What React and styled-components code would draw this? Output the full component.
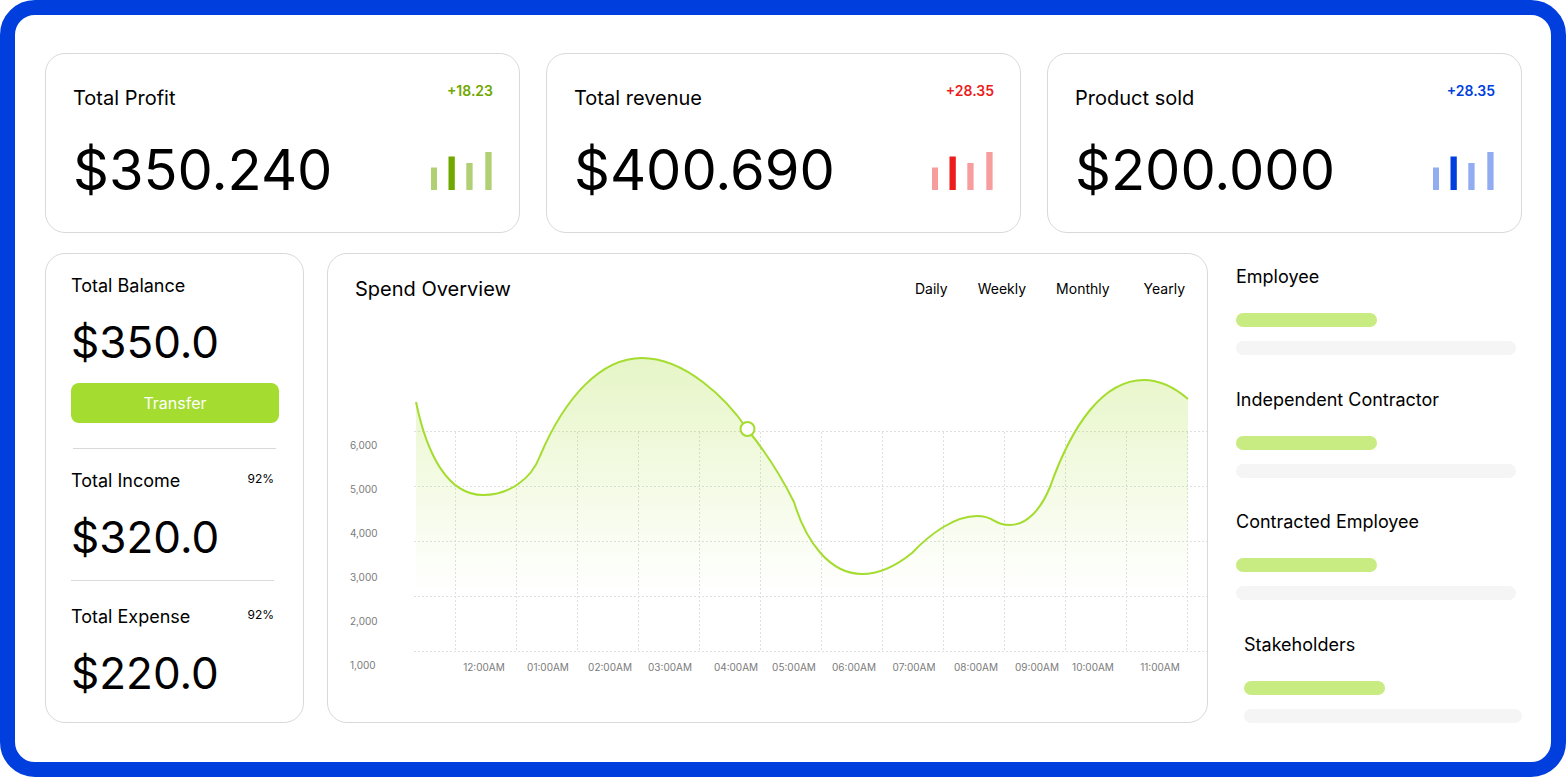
import React from "react";
import styled, { createGlobalStyle } from "styled-components";

const GlobalStyle = createGlobalStyle`
  * { box-sizing: border-box; }
  body {
    margin: 0;
    background: #fff;
    color: #000;
    font-family: Inter, "Liberation Sans", sans-serif;
  }
  h2, h3, p { margin: 0; font-weight: 400; }
`;

const Frame = styled.main`
  display: flex;
  flex-direction: column;
  gap: 20px;
  min-height: 100vh;
  padding: 38px 29px 38px 30px;
  border: 15px solid #003fdd;
  border-radius: 35px;
`;

const StatRow = styled.section`
  display: grid;
  grid-template-columns: repeat(3, minmax(0, 1fr));
  gap: 26px;
`;

const Card = styled.article`
  border: 1px solid #d9d9d9;
  border-radius: 20px;
`;

const StatCard = styled(Card)`
  display: flex;
  justify-content: space-between;
  min-height: 180px;
  padding: 28px 26px 28px 27px;
`;

const StatText = styled.div`
  display: flex;
  flex-direction: column;
  gap: 24px;
`;

const StatTitle = styled.h2`
  font-size: 20px;
  line-height: 32px;
`;

const StatValue = styled.p`
  font-size: 56px;
  line-height: 64px;
`;

const StatTrend = styled.div`
  display: flex;
  flex-direction: column;
  align-items: flex-end;
  gap: 52px;
  color: ${(p) => p.$color};
`;

const Change = styled.span`
  font-size: 14px;
  line-height: 18px;
  font-weight: 600;
`;

const BarsIcon = styled.svg`
  display: block;
  width: 62px;
  height: 38px;
  fill: currentColor;
`;

const Lower = styled.section`
  display: grid;
  grid-template-columns: 259px minmax(0, 1fr) 291px;
  gap: 23px;
`;

const BalanceCard = styled(Card)`
  display: flex;
  flex-direction: column;
  min-height: 470px;
  padding: 20px 24px 20px 25px;
`;

const Entry = styled.div`
  display: flex;
  flex-direction: column;
  gap: 16px;
`;

const EntryHead = styled.div`
  display: flex;
  justify-content: space-between;
  padding-right: 5px;
`;

const Label = styled.h3`
  font-size: 18px;
  line-height: 24px;
`;

const Percent = styled.span`
  font-size: 12px;
  line-height: 20px;
`;

const Amount = styled.p`
  font-size: 44px;
  line-height: 56px;
`;

const TransferButton = styled.button`
  height: 40px;
  margin-top: 13px;
  border: 0;
  border-radius: 8px;
  background: #a4dc2f;
  color: #fff;
  font: inherit;
  font-size: 16px;
  cursor: pointer;
`;

const Divider = styled.hr`
  width: 203px;
  height: 1px;
  margin: ${(p) => p.$space};
  border: 0;
  background: #d9d9d9;
`;

const OverviewCard = styled(Card)`
  display: flex;
  flex-direction: column;
  justify-content: space-between;
  padding: 19px 0 42px;
`;

const OverviewHead = styled.header`
  display: flex;
  align-items: center;
  justify-content: space-between;
  padding: 0 22px 0 27px;
`;

const Ranges = styled.nav`
  display: flex;
  gap: 30px;

  button {
    padding: 0;
    border: 0;
    background: none;
    color: inherit;
    font: inherit;
    font-size: 14px;
    line-height: 20px;
    cursor: pointer;
  }

  button:last-child { margin-left: 4px; }
`;

const ChartSvg = styled.svg`
  display: block;
  width: 100%;
  height: auto;

  text {
    fill: #7b7b7b;
    font-size: 10px;
  }
`;

const Groups = styled.aside`
  display: flex;
  flex-direction: column;
  justify-content: space-between;
  padding: 12px 0 0 5px;
`;

const Group = styled.section`
  display: flex;
  flex-direction: column;
  gap: 14px;
  padding-left: ${(p) => (p.$inset ? 8 : 0)}px;

  h3 { margin-bottom: 10px; }
`;

const Bar = styled.div`
  width: ${(p) => p.$width}px;
  max-width: 100%;
  height: 14px;
  border-radius: 7px;
  background: ${(p) => p.$color};
`;

const stats = [
  { title: "Total Profit", value: "$350.240", change: "+18.23", color: "#71a800", tint: 0.55 },
  { title: "Total revenue", value: "$400.690", change: "+28.35", color: "#ec1c1c", tint: 0.43 },
  { title: "Product sold", value: "$200.000", change: "+28.35", color: "#003fdd", tint: 0.43 },
];

const groups = ["Employee", "Independent Contractor", "Contracted Employee", "Stakeholders"];

const hours = [
  ["12:00AM", 156], ["01:00AM", 220], ["02:00AM", 282], ["03:00AM", 342],
  ["04:00AM", 408], ["05:00AM", 466], ["06:00AM", 526], ["07:00AM", 586],
  ["08:00AM", 648], ["09:00AM", 709], ["10:00AM", 765], ["11:00AM", 832],
];
const levels = ["6,000", "5,000", "4,000", "3,000", "2,000", "1,000"];
const rows = [101.5, 156.5, 211.5, 266.5, 321.5];
const columns = Array.from({ length: 13 }, (_, i) => 127.5 + i * 61);

const curve =
  "M88 72 C99 125 120 165 155 165 C180 165 203 150 212 126 C237 67 273 28 314 28 " +
  "C357 28 399 69 419 99 C437 121 454 148 466 172 C478 212 502 244 534 244 " +
  "C551 244 568 236 584 223 C603 203 627 186 649 186 C668 186 664 195 682 195 " +
  "C699 195 713 179 722 157 C744 95 775 50 816 50 C832 50 846 57 860 69";

function MiniBars({ tint }) {
  return (
    <BarsIcon viewBox="0 0 62 38" aria-hidden="true">
      <rect x="0" y="15.5" width="6" height="22.5" opacity={tint} />
      <rect x="17.5" y="4.5" width="6.3" height="33.5" />
      <rect x="35.3" y="11" width="6.3" height="27" opacity={tint} />
      <rect x="54.3" y="0" width="6.3" height="38" opacity={tint} />
    </BarsIcon>
  );
}

function SpendChart() {
  return (
    <ChartSvg viewBox="0 0 879 350" role="img" aria-label="Spend over the day">
      <defs>
        <linearGradient id="spend" gradientUnits="userSpaceOnUse" x1="0" y1="28" x2="0" y2="262">
          <stop offset="0" stopColor="#a4dc2f" stopOpacity="0.27" />
          <stop offset="1" stopColor="#a4dc2f" stopOpacity="0" />
        </linearGradient>
      </defs>
      <g stroke="#dfdfdf" strokeDasharray="2 2">
        {rows.map((y) => <line key={y} x1="86" x2="879" y1={y} y2={y} />)}
        {columns.map((x) => <line key={x} x1={x} x2={x} y1="102" y2="321" />)}
      </g>
      <path d={`${curve} V262 H88 Z`} fill="url(#spend)" />
      <path d={curve} fill="none" stroke="#a4dc2f" strokeWidth="2" />
      <circle cx="419.5" cy="99" r="7" fill="#fff" stroke="#a4dc2f" strokeWidth="2" />
      {levels.map((t, i) => <text key={t} x="22" y={119 + i * 44}>{t}</text>)}
      {hours.map(([t, x]) => <text key={t} x={x} y="341" textAnchor="middle">{t}</text>)}
    </ChartSvg>
  );
}

export default function App() {
  return (
    <>
      <GlobalStyle />
      <Frame>
        <StatRow>
          {stats.map((s) => (
            <StatCard key={s.title}>
              <StatText>
                <StatTitle>{s.title}</StatTitle>
                <StatValue>{s.value}</StatValue>
              </StatText>
              <StatTrend $color={s.color}>
                <Change>{s.change}</Change>
                <MiniBars tint={s.tint} />
              </StatTrend>
            </StatCard>
          ))}
        </StatRow>
        <Lower>
          <BalanceCard>
            <Entry>
              <Label>Total Balance</Label>
              <Amount>$350.0</Amount>
            </Entry>
            <TransferButton type="button">Transfer</TransferButton>
            <Divider $space="25px 0 20px 2px" />
            <Entry>
              <EntryHead><Label>Total Income</Label><Percent>92%</Percent></EntryHead>
              <Amount>$320.0</Amount>
            </Entry>
            <Divider $space="15px 0 24px 0" />
            <Entry>
              <EntryHead><Label>Total Expense</Label><Percent>92%</Percent></EntryHead>
              <Amount>$220.0</Amount>
            </Entry>
          </BalanceCard>
          <OverviewCard>
            <OverviewHead>
              <StatTitle>Spend Overview</StatTitle>
              <Ranges aria-label="Period">
                {["Daily", "Weekly", "Monthly", "Yearly"].map((r) => (
                  <button key={r} type="button">{r}</button>
                ))}
              </Ranges>
            </OverviewHead>
            <SpendChart />
          </OverviewCard>
          <Groups>
            {groups.map((g, i) => (
              <Group key={g} $inset={i === 3}>
                <Label>{g}</Label>
                <Bar $width={141} $color="#c8eb82" />
                <Bar $width={280} $color="#f5f5f5" />
              </Group>
            ))}
          </Groups>
        </Lower>
      </Frame>
    </>
  );
}
